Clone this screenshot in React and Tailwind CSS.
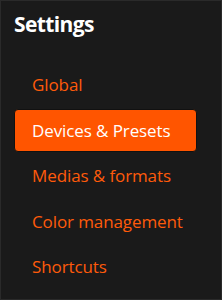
export default function App() {
  const items = ["Global", "Devices & Presets", "Medias & formats", "Color management", "Shortcuts"];
  const active = 1;
  return (
    <div
      className="w-[222px] h-[300px] bg-[#1a1a1a] border border-[#2a2a2a] overflow-hidden"
      style={{ fontFamily: '"Open Sans", "Noto Sans", sans-serif' }}
    >
      <div className="pl-[13px] pt-[9px]">
        <h1 className="text-[21px] leading-[29px] font-bold text-white tracking-[-0.6px]">Settings</h1>
        <ul className="mt-[24.5px] w-[183px] flex flex-col gap-[2.5px]">
          {items.map((it, i) => (
            <li
              key={it}
              className={
                i === active
                  ? "h-[43px] flex items-center pl-[17px] rounded-[4px] bg-[#ff5500] border border-[#111] text-white text-[17px] tracking-[-0.1px]"
                  : "h-[43px] flex items-center pl-[18px] text-[#ff5a0a] text-[17px] tracking-[-0.1px]"
              }
            >
              {it}
            </li>
          ))}
        </ul>
      </div>
    </div>
  );
}
